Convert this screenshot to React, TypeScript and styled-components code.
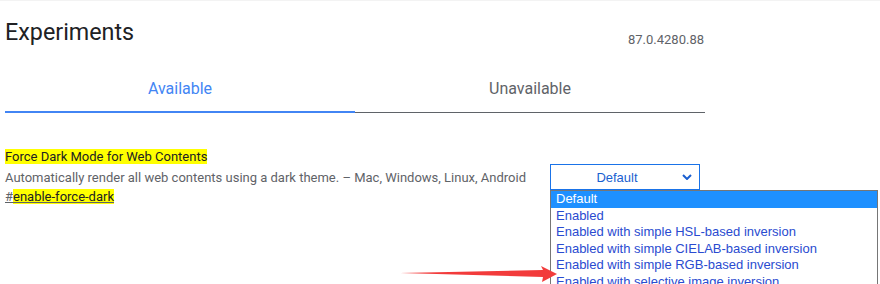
import styled, { createGlobalStyle } from 'styled-components'

const GlobalStyle = createGlobalStyle`
	html, body {
		margin: 0;
		padding: 0;
		background: #fff;
		overflow: hidden;
	}
	body {
		border-top: 1px solid #f3f3f3;
		font-family: Roboto, 'Liberation Sans', sans-serif;
	}
`

const OPTIONS = [
	'Default',
	'Enabled',
	'Enabled with simple HSL-based inversion',
	'Enabled with simple CIELAB-based inversion',
	'Enabled with simple RGB-based inversion',
	'Enabled with selective image inversion',
]

const App = () => {
	return (
		<Page>
			<GlobalStyle />
			<Header>
				<Title>Experiments</Title>
				<Version>87.0.4280.88</Version>
			</Header>
			<Tabs>
				<Tab $active>Available</Tab>
				<Tab>Unavailable</Tab>
			</Tabs>
			<Experiment>
				<ExperimentText>
					<ExperimentName>
						<Highlight>Force Dark Mode for Web Contents</Highlight>
					</ExperimentName>
					<Description>
						Automatically render all web contents using a dark theme. – Mac, Windows, Linux, Android
					</Description>
					<Permalink>
						#<Highlight>enable-force-dark</Highlight>
					</Permalink>
				</ExperimentText>
				<SelectWrap>
					<SelectBox>
						<SelectValue>Default</SelectValue>
						<Chevron viewBox="0 0 10 6" width={10} height={6}>
							<path d="M1 1 L5 5 L9 1" fill="none" stroke="#1a5fd0" strokeWidth={2} />
						</Chevron>
					</SelectBox>
					<OptionList>
						{OPTIONS.map((o, i) => (
							<Option key={o} $selected={i === 0}>
								{o}
							</Option>
						))}
					</OptionList>
				</SelectWrap>
			</Experiment>
			<Arrow viewBox="0 0 160 20" width={160} height={20}>
				<polygon points="0,7 143,4 141,0 157,8 142,16 143,11" fill="#f23b3b" />
			</Arrow>
		</Page>
	)
}

const Page = styled.div`
	position: relative;
	width: 700px;
	margin-left: 5px;
	height: 283px;
`

const Header = styled.div`
	display: flex;
	justify-content: space-between;
	align-items: baseline;
	padding-top: 17px;
	height: 37px;
`

const Title = styled.h1`
	margin: 0;
	font-size: 23.3px;
	font-weight: 400;
	color: #202124;
`

const Version = styled.span`
	font-size: 13px;
	color: #5f6368;
	position: relative;
	top: 4px;
	margin-right: 1px;
`

const Tabs = styled.div`
	display: grid;
	grid-template-columns: 1fr 1fr;
	margin-top: 16px;
`

const Tab = styled.div<{ $active?: boolean }>`
	box-sizing: border-box;
	height: 42px;
	display: flex;
	align-items: center;
	justify-content: center;
	padding-bottom: 6px;
	font-size: 16px;
	color: ${(p) => (p.$active ? '#4285f4' : '#5f6368')};
	border-bottom: ${(p) => (p.$active ? '2px solid #4285f4' : '1px solid #5f6368')};
	margin-bottom: ${(p) => (p.$active ? '0' : '1px')};
`

const Experiment = styled.div`
	display: flex;
	justify-content: space-between;
	margin-top: 33px;
`

const ExperimentText = styled.div`
	display: flex;
	flex-direction: column;
	font-size: 13px;
	line-height: 20px;
`

const ExperimentName = styled.div`
	color: #202124;
`

const Highlight = styled.span`
	background: #ffff00;
`

const Description = styled.div`
	color: #5f6368;
	margin-top: 1px;
	margin-bottom: -1px;
`

const Permalink = styled.div`
	color: #5f6368;
	text-decoration: underline;
	span {
		color: #202124;
	}
`

const SelectWrap = styled.div`
	position: relative;
	margin-top: 17px;
	margin-right: 5px;
`

const SelectBox = styled.div`
	box-sizing: border-box;
	width: 150px;
	height: 26px;
	border: 1px solid #1a73e8;
	display: flex;
	align-items: center;
	justify-content: center;
	position: relative;
`

const SelectValue = styled.span`
	font-family: 'Liberation Sans', Arial, sans-serif;
	font-size: 13px;
	color: #1a5fd0;
	margin-right: 16px;
`

const Chevron = styled.svg`
	position: absolute;
	right: 7px;
	top: 9px;
`

const OptionList = styled.div`
	position: absolute;
	top: 26px;
	left: 0;
	width: 328px;
	box-sizing: border-box;
	border: 1px solid #767676;
	border-bottom: none;
	background: #fff;
	z-index: 2;
`

const Option = styled.div<{ $selected?: boolean }>`
	font-family: 'Liberation Sans', Arial, sans-serif;
	font-size: 13px;
	height: 16.6px;
	line-height: 16.6px;
	padding-left: 5px;
	white-space: nowrap;
	color: ${(p) => (p.$selected ? '#fff' : '#2a4bd0')};
	background: ${(p) => (p.$selected ? '#1e90ff' : 'transparent')};
`

const Arrow = styled.svg`
	position: absolute;
	left: 395px;
	top: 265px;
	z-index: 3;
`

export default App
